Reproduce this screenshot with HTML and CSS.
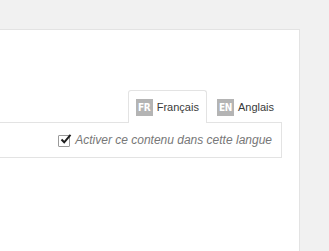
FILE: index.html
```
<!DOCTYPE html>
<html lang="fr">
<head>
    <meta charset="UTF-8">
    <title>Langues</title>
    <link rel="stylesheet" href="styles.css">
</head>
<body>
    <div class="page">
        <div class="panel">
            <div class="lang-tabs">
                <div class="lang-tab active">
                    <span class="flag">FR</span>
                    <span class="lang-name">Français</span>
                </div>
                <div class="lang-tab">
                    <span class="flag">EN</span>
                    <span class="lang-name">Anglais</span>
                </div>
            </div>
            <div class="lang-box">
                <label class="lang-toggle">
                    <span class="check">
                        <svg width="13" height="13" viewBox="0 0 13 13">
                            <path d="M2.5 6.5 L5.2 9.3 L11.5 1.8" fill="none" stroke="#1d1d1d" stroke-width="2"/>
                        </svg>
                    </span>
                    <span class="toggle-text">Activer ce contenu dans cette langue</span>
                </label>
            </div>
        </div>
    </div>
</body>
</html>
```

FILE: styles.css
```
/* Reset and base styles */
* {
    margin: 0;
    padding: 0;
    box-sizing: border-box;
}

body {
    font-family: "Liberation Sans", Arial, sans-serif;
    background-color: #f1f1f1;
    color: #333;
    overflow: hidden;
}

.page {
    padding-top: 29px;
}

/* Panel */
.panel {
    width: 300px;
    height: 222px;
    background-color: #fff;
    border: 1px solid #e3e3e3;
    border-left: none;
    border-bottom: none;
    padding-top: 60px;
}

/* Language tabs */
.lang-tabs {
    display: flex;
    justify-content: flex-end;
    gap: 2px;
    margin-right: 17px;
}

.lang-tab {
    display: flex;
    align-items: center;
    gap: 4px;
    height: 33px;
    padding: 0 7px;
    border: 1px solid transparent;
    border-bottom: none;
    border-radius: 3px 3px 0 0;
    margin-bottom: -1px;
    font-size: 11px;
    color: #3a3a3a;
}

.lang-tab.active {
    background-color: #fff;
    border-color: #e3e3e3;
    position: relative;
    z-index: 1;
}

.flag {
    display: flex;
    align-items: center;
    justify-content: center;
    width: 17px;
    height: 17px;
    background-color: #b4b4b4;
    color: #fff;
    font-family: "DejaVu Sans Condensed", "DejaVu Sans", sans-serif;
    font-weight: bold;
    font-size: 10px;
    letter-spacing: -0.4px;
}

/* Toggle box */
.lang-box {
    margin-right: 17px;
    border: 1px solid #e3e3e3;
    border-left: none;
    padding: 9px 9px 9px 0;
    display: flex;
    justify-content: flex-end;
}

.lang-toggle {
    display: flex;
    align-items: center;
    gap: 5px;
    height: 16px;
}

.check {
    position: relative;
    width: 12px;
    height: 12px;
    border: 1px solid #9a9a9a;
    border-radius: 1px;
    background-color: #fff;
    margin-top: 2px;
}

.check svg {
    position: absolute;
    left: 0;
    top: -3px;
}

.toggle-text {
    font-style: italic;
    font-size: 12px;
    color: #777;
}
```
